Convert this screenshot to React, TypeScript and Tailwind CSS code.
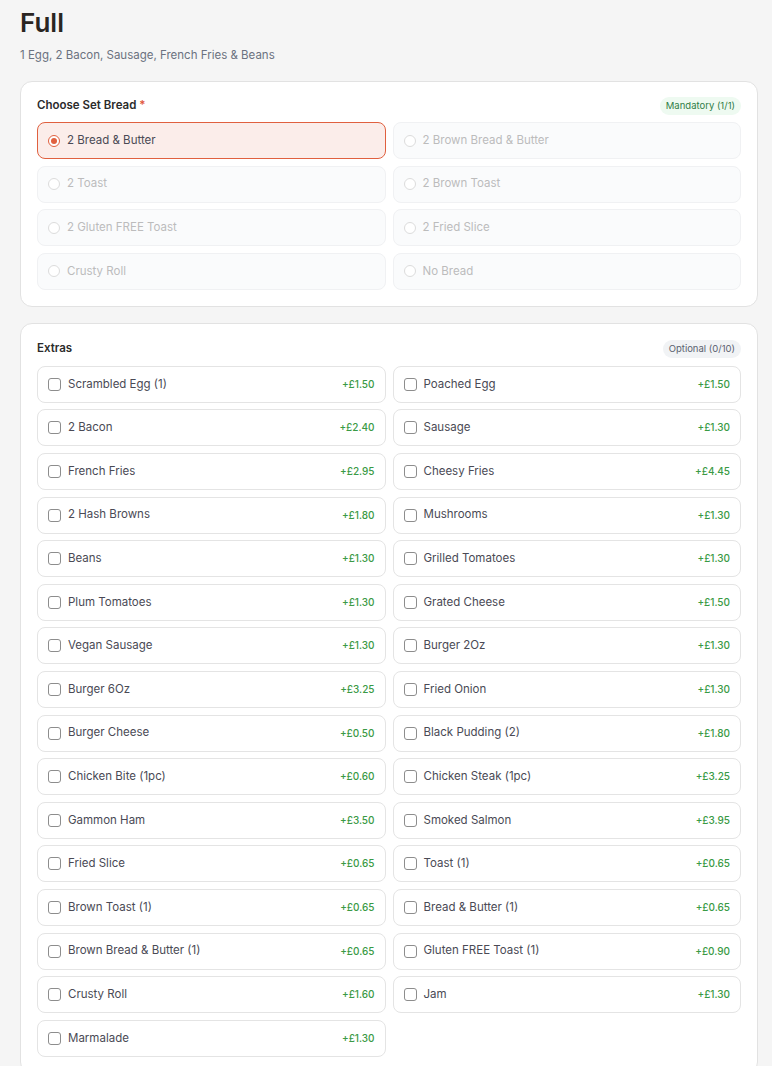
import React from 'react'

const breads = [
  '2 Bread & Butter',
  '2 Brown Bread & Butter',
  '2 Toast',
  '2 Brown Toast',
  '2 Gluten FREE Toast',
  '2 Fried Slice',
  'Crusty Roll',
  'No Bread',
]

const extras: [string, string][] = [
  ['Scrambled Egg (1)', '+£1.50'],
  ['Poached Egg', '+£1.50'],
  ['2 Bacon', '+£2.40'],
  ['Sausage', '+£1.30'],
  ['French Fries', '+£2.95'],
  ['Cheesy Fries', '+£4.45'],
  ['2 Hash Browns', '+£1.80'],
  ['Mushrooms', '+£1.30'],
  ['Beans', '+£1.30'],
  ['Grilled Tomatoes', '+£1.30'],
  ['Plum Tomatoes', '+£1.30'],
  ['Grated Cheese', '+£1.50'],
  ['Vegan Sausage', '+£1.30'],
  ['Burger 2Oz', '+£1.30'],
  ['Burger 6Oz', '+£3.25'],
  ['Fried Onion', '+£1.30'],
  ['Burger Cheese', '+£0.50'],
  ['Black Pudding (2)', '+£1.80'],
  ['Chicken Bite (1pc)', '+£0.60'],
  ['Chicken Steak (1pc)', '+£3.25'],
  ['Gammon Ham', '+£3.50'],
  ['Smoked Salmon', '+£3.95'],
  ['Fried Slice', '+£0.65'],
  ['Toast (1)', '+£0.65'],
  ['Brown Toast (1)', '+£0.65'],
  ['Bread & Butter (1)', '+£0.65'],
  ['Brown Bread & Butter (1)', '+£0.65'],
  ['Gluten FREE Toast (1)', '+£0.90'],
  ['Crusty Roll', '+£1.60'],
  ['Jam', '+£1.30'],
  ['Marmalade', '+£1.30'],
]

const App = () => {
  return (
    <div className="min-h-[1066px] bg-[#f5f5f5] font-['Inter',sans-serif]">
      <div className="pl-5 pr-[14px] pt-[7px] pb-6">
        <h1 className="text-[26px] leading-[32px] font-semibold text-[#2a2522]">Full</h1>
        <p className="mt-[9px] text-[11.5px] leading-[14px] text-[#6b7280]">
          1 Egg, 2 Bacon, Sausage, French Fries &amp; Beans
        </p>

        <div className="mt-[19px] rounded-xl border border-[#e2e2e2] bg-white px-4 pt-[16px] pb-4">
          <div className="flex items-center justify-between h-[16px] mb-[8px]">
            <div className="text-[11.5px] font-semibold text-[#2b2b2b]">
              Choose Set Bread <span className="text-[#e0553a]">*</span>
            </div>
            <span className="rounded-full bg-[#eefaf1] px-[6px] py-[2px] text-[9.5px] leading-[14px] text-[#2f7d47]">
              Mandatory (1/1)
            </span>
          </div>
          <div className="grid grid-cols-2 gap-x-[7px] gap-y-[6.6px]">
            {breads.map((b, i) =>
              i === 0 ? (
                <div key={b} className="flex items-center h-[37px] rounded-lg border border-[#e0603f] bg-[#fbedea] px-[10px] gap-[7px]">
                  <span className="flex items-center justify-center w-[12px] h-[12px] rounded-full border border-[#e0603f] bg-white">
                    <span className="w-[6px] h-[6px] rounded-full bg-[#e0603f]" />
                  </span>
                  <span className="text-[11.5px] text-[#4a4a55]">{b}</span>
                </div>
              ) : (
                <div key={b} className="flex items-center h-[37px] rounded-lg border border-[#f0f1f3] bg-[#fafbfc] px-[10px] gap-[7px]">
                  <span className="w-[12px] h-[12px] rounded-full border border-[#dcdcdc] bg-white" />
                  <span className="text-[11.5px] text-[#bcbcbc]">{b}</span>
                </div>
              )
            )}
          </div>
        </div>

        <div className="mt-[16px] rounded-xl border border-[#e2e2e2] bg-white px-4 pt-[17px] pb-4">
          <div className="flex items-center justify-between h-[16px] mb-[9px]">
            <div className="text-[11.5px] font-semibold text-[#2b2b2b]">Extras</div>
            <span className="rounded-full bg-[#f1f3f5] px-[6px] py-[2px] text-[9.5px] leading-[14px] text-[#5b6270]">
              Optional (0/10)
            </span>
          </div>
          <div className="grid grid-cols-2 gap-x-[7px] gap-y-[6.6px]">
            {extras.map(([name, price]) => (
              <div key={name} className="flex items-center h-[37px] rounded-lg border border-[#e4e4e4] bg-white pl-[10px] pr-[10px] gap-[7px]">
                <span className="w-[13px] h-[13px] rounded-[3px] border border-[#8d8d8d] bg-white" />
                <span className="flex-1 text-[11.5px] text-[#4a4a55]">{name}</span>
                <span className="text-[10px] font-medium text-[#3a9a45]">{price}</span>
              </div>
            ))}
          </div>
        </div>
      </div>
    </div>
  )
}

export default App
